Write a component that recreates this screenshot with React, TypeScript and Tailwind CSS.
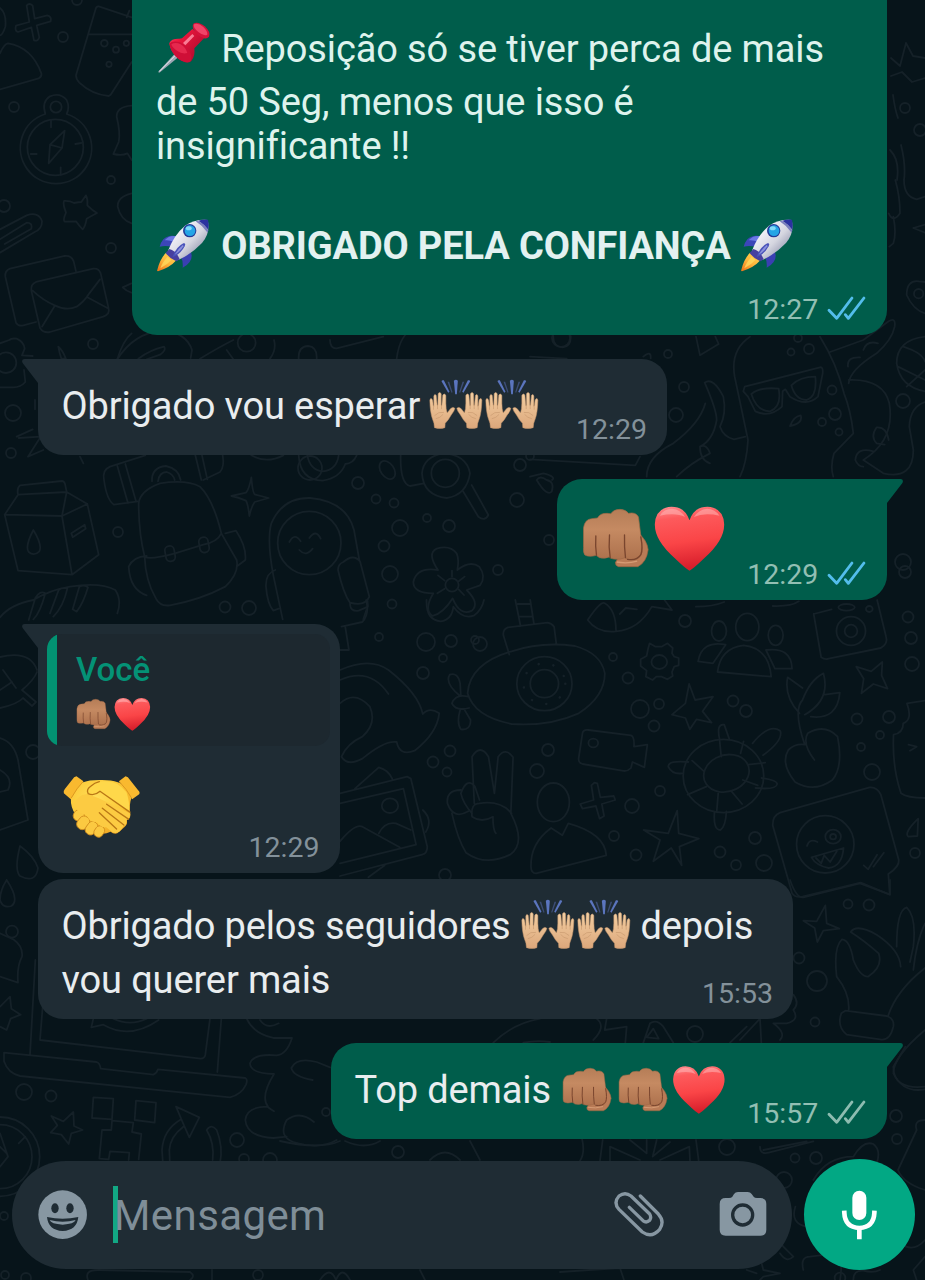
import React from "react";

type EmojiProps = { className?: string };

function Gradients() {
  return (
    <defs>
      <linearGradient id="heartFill" x1="0" y1="0" x2="0.15" y2="1">
        <stop offset="0" stopColor="#ff8f92" />
        <stop offset="0.22" stopColor="#fd5a5c" />
        <stop offset="0.6" stopColor="#fa4547" />
        <stop offset="1" stopColor="#d81f2c" />
      </linearGradient>
      <linearGradient id="fistFill" x1="0" y1="0" x2="0" y2="1">
        <stop offset="0" stopColor="#b57d57" />
        <stop offset="0.4" stopColor="#c58a62" />
        <stop offset="1" stopColor="#ad714d" />
      </linearGradient>
      <linearGradient id="handFill" x1="0" y1="0" x2="0" y2="1">
        <stop offset="0" stopColor="#f3cfa2" />
        <stop offset="1" stopColor="#dca77b" />
      </linearGradient>
      <radialGradient id="shakeFill" cx="0.4" cy="0.35" r="0.75">
        <stop offset="0" stopColor="#ffdf5a" />
        <stop offset="0.6" stopColor="#fcc937" />
        <stop offset="1" stopColor="#ea9c1e" />
      </radialGradient>
      <linearGradient id="rocketBody" x1="0" y1="0" x2="1" y2="1">
        <stop offset="0.25" stopColor="#f4f3fa" />
        <stop offset="0.55" stopColor="#d5d6e0" />
        <stop offset="0.85" stopColor="#8d90ab" />
      </linearGradient>
      <linearGradient id="rocketFlame" x1="0.8" y1="0.1" x2="0.2" y2="1">
        <stop offset="0" stopColor="#ffcf4d" />
        <stop offset="0.5" stopColor="#fdb53c" />
        <stop offset="1" stopColor="#ef7a1d" />
      </linearGradient>
      <linearGradient id="pinFill" x1="0" y1="0" x2="1" y2="0.8">
        <stop offset="0" stopColor="#ff4a68" />
        <stop offset="0.35" stopColor="#e8163c" />
        <stop offset="1" stopColor="#a8082c" />
      </linearGradient>
    </defs>
  );
}

function Pin({ className = "h-[54px] w-[54px]" }: EmojiProps) {
  return (
    <svg viewBox="78 60 162 162" className={`shrink-0 overflow-visible ${className}`}>
      <path d="M133 160 L143 170 L90 214 Q84 217 86 211 Z" fill="#9fa7b4" />
      <path d="M135 164 L88 211" stroke="#e8ebf2" strokeWidth="3" />
      <path d="M118 126 Q124 112 148 113 L156 112 L187 84 L222 112 L193 142 Q196 166 184 180 Q168 190 146 174 Q120 152 118 126Z" fill="url(#pinFill)" />
      <path d="M118 128 Q128 118 150 124 Q176 138 184 162 Q186 176 180 183 Q166 188 146 174 Q122 154 118 128Z" fill="#cf0f37" />
      <path d="M124 130 Q136 122 152 130 Q168 140 172 156 Q156 160 142 150 Q126 140 124 130Z" fill="#ee3559" opacity="0.7" />
      <path d="M190 68 Q204 60 224 76 Q243 93 237 107 Q226 120 204 102 Q182 82 190 68Z" fill="#d5123b" />
      <path d="M192 70 Q204 64 220 78 Q234 92 232 101 Q222 107 206 94 Q188 80 192 70Z" fill="#f04468" />
      <path d="M159 126 L187 99 L193 105 L166 133Z" fill="#ff8ea5" opacity="0.85" />
    </svg>
  );
}

function Rocket({ className = "h-[54px] w-[54px]" }: EmojiProps) {
  return (
    <svg viewBox="78 653 162 162" className={`shrink-0 overflow-visible ${className}`}>
      <path d="M146 710 Q118 700 100 717 Q92 727 89 739 Q108 734 129 741Z" fill="#3c46b8" />
      <path d="M140 708 Q118 704 104 720 Q116 718 132 724Z" fill="#6a78e4" />
      <path d="M181 748 Q190 772 179 785 Q170 797 158 802 Q160 784 152 768Z" fill="#3a3fb2" />
      <path d="M108 757 L139 780 Q120 802 84 813 Q80 813 82 808 Q90 776 108 757Z" fill="url(#rocketFlame)" />
      <path d="M113 769 Q96 787 91 804 Q112 793 124 779Z" fill="#ffd95e" opacity="0.8" />
      <path d="M114 751 Q132 704 165 676 Q196 656 233 659 Q242 698 216 728 Q184 762 143 780 Q126 772 114 751Z" fill="url(#rocketBody)" />
      <path d="M118 746 Q139 751 149 777 L139 783 Q118 774 107 758Z" fill="#4740a0" />
      <path d="M205 661 Q220 656 234 658 Q238 674 235 688 Q222 672 205 661Z" fill="#2b32a0" />
      <path d="M203 661 Q222 669 235 690 L233 697 Q218 676 197 663Z" fill="#7b80bd" />
      <circle cx="179" cy="691" r="20" fill="#233c98" />
      <circle cx="180" cy="691" r="16" fill="#25a5e6" />
      <ellipse cx="176" cy="684" rx="9" ry="6" fill="#83dcfa" />
      <path d="M160 729 Q137 741 128 770 Q151 763 164 738 Q168 726 160 729Z" fill="#4952b9" />
      <path d="M159 733 Q143 746 134 763 Q151 754 160 738Z" fill="#8b91dd" />
    </svg>
  );
}

function Hands() {
  const hand =
    "M107 263 Q107 250 101 237 Q94 219 93 181 Q94 174 98 176 Q102 177 103 196 L105 199 L105 168 Q107 160 112 166 L115 196 L117 196 L118 161 Q122 154 127 161 L127 196 L129 197 L132 165 Q136 158 141 166 L141 190 Q141 208 145 219 L155 206 Q163 199 168 205 Q167 213 157 225 Q149 240 139 250 L138 263 Q124 268 107 263Z";
  return (
    <svg viewBox="87.5 114 167 162" className="h-[54px] w-[55.7px] shrink-0 overflow-visible">
      <g fill="url(#handFill)" stroke="#c8976c" strokeWidth="1.6" strokeLinejoin="round">
        <path d={hand} />
        <path d={hand} transform="translate(342 0) scale(-1 1)" />
      </g>
      <g fill="none" stroke="#c99a70" strokeWidth="2" strokeLinecap="round">
        <path d="M108 226 Q119 214 134 217 M112 236 Q124 234 132 224 M104 198V208 M116 196V206 M128 197V206" />
        <path d="M234 226 Q223 214 208 217 M230 236 Q218 234 210 224 M238 198V208 M226 196V206 M214 197V206" />
      </g>
      <g fill="#5b75be">
        <path d="M165 122 Q171 116 177 122 L174 163 H169Z" />
        <path d="M128 124 Q129 119 135 121 L152 155 L148 158Z" />
        <path d="M214 124 Q213 119 207 121 L190 155 L194 158Z" />
      </g>
      <g fill="#3d4d76">
        <path d="M146 125 L151 125 L161 157 L158 158Z" />
        <path d="M196 125 L191 125 L181 157 L184 158Z" />
      </g>
    </svg>
  );
}

function Fist({ className = "h-[54px] w-[55.7px]" }: EmojiProps) {
  return (
    <svg viewBox="116.5 124 225 218" className={`shrink-0 overflow-visible ${className}`}>
      <path d="M296 218 Q324 242 327 270 Q322 308 296 321 L238 321 Q228 319 229 308 L240 290Z" fill="#b97b56" stroke="#9c6240" strokeWidth="2" />
      <path d="M133 204 Q137 179 157 177 L175 175 Q183 160 204 161 L215 162 Q224 149 243 149 Q260 150 268 161 Q290 156 298 172 L304 220 Q310 254 308 279 Q302 300 284 301 Q265 302 258 294 Q244 301 224 298 Q214 297 210 292 Q198 298 181 294 L171 287 Q150 293 137 286 Q132 281 133 263Z" fill="url(#fistFill)" stroke="#9f6846" strokeWidth="2" />
      <g fill="none" stroke="#79452e" strokeWidth="4" strokeLinecap="round">
        <path d="M170 229 Q168 258 172 287" />
        <path d="M211 226 Q208 262 213 294" />
        <path d="M256 226 Q255 264 259 294" />
        <path d="M305 232 Q312 268 305 285 Q293 304 265 299" />
      </g>
      <path d="M233 307 Q266 313 294 304" fill="none" stroke="#d59b74" strokeWidth="4" />
    </svg>
  );
}

function Heart({ className = "h-[54px] w-[55.7px]" }: EmojiProps) {
  return (
    <svg viewBox="338.5 122 225 218" className={`shrink-0 overflow-visible ${className}`}>
      <path d="M451 331 Q440 326 407 294 Q346 240 347 192 Q349 142 397 139 Q437 139 451 180 Q465 139 505 139 Q553 142 555 192 Q556 240 495 294 Q462 326 451 331Z" fill="url(#heartFill)" />
      <path d="M362 166 Q374 145 399 145 Q424 147 438 170 Q410 156 362 166Z M464 170 Q479 147 504 145 Q528 146 541 166 Q494 156 464 170Z" fill="#ffb6b6" opacity="0.55" />
    </svg>
  );
}

function Handshake() {
  return (
    <svg viewBox="188 492 237 196" className="h-[65px] w-[79px] shrink-0 overflow-visible">
      <path d="M218 540 Q238 510 300 510 Q363 508 386 536 L398 561 Q388 584 394 615 Q392 630 383 630 Q386 644 376 652 Q366 661 354 671 Q343 674 334 666 Q313 676 300 670 Q240 636 222 604 Q210 580 216 556Z" fill="url(#shakeFill)" />
      <g fill="#fbc941" stroke="#cf8a1c" strokeWidth="2.5">
        <rect x="222" y="600" width="32" height="34" rx="15" transform="rotate(30 238 617)" />
        <rect x="235" y="618" width="33" height="42" rx="15" transform="rotate(38 251 639)" />
        <rect x="261" y="634" width="31" height="42" rx="14" transform="rotate(36 276 655)" />
        <rect x="286" y="648" width="28" height="35" rx="13" transform="rotate(34 300 665)" />
      </g>
      <path d="M222 588 Q230 555 264 552 L300 566 L392 610 Q394 628 382 630 Q384 647 372 651 Q358 677 338 667 L320 652 Q306 656 293 636 Q270 640 262 616 Q240 612 235 603Z" fill="#fccb42" />
      <path d="M231 499 L252 514 Q234 535 214 568 L193 550 Q190 544 196 537 L224 502Z M379 499 L359 514 Q382 538 399 568 L420 553 Q424 548 417 541 L386 502Z" fill="#f9b92f" />
      <path d="M250 516 Q233 533 215 565 M361 516 Q382 537 397 564" stroke="#dc9820" strokeWidth="3" fill="none" />
      <path d="M266 550 Q260 539 274 529 Q292 514 318 514 Q353 511 382 547 Q392 578 390 604 L325 558 Q314 552 301 544 Q283 560 266 550Z" fill="#ffd84a" />
      <path d="M266 550 Q260 539 274 529 Q286 518 300 515 M266 551 Q284 560 302 544 L392 607 M322 583 L388 628 M309 595 L374 646 M300 609 L352 658" fill="none" stroke="#b97716" strokeWidth="4" strokeLinecap="round" />
    </svg>
  );
}

function Ticks({ className }: { className: string }) {
  return (
    <svg viewBox="890 342 124 84" className={`ml-[8px] h-[28px] w-[41.3px] shrink-0 -translate-y-[2px] ${className}`} fill="none" stroke="currentColor" strokeWidth="8.5" strokeLinecap="round" strokeLinejoin="round">
      <path d="M899 391 L922 415 L968 354" />
      <path d="M948 404 L957 415 L1004 354" />
    </svg>
  );
}

function Tail({ side, className }: { side: "left" | "right"; className: string }) {
  return (
    <svg viewBox="0 0 17 26" className={`absolute top-0 h-[26px] w-[17px] ${side === "left" ? "-left-4" : "-right-4"} ${className}`}>
      {side === "left" ? (
        <path fill="currentColor" d="M17 0H2.5Q-1 0 .6 4L16 24 L17 26Z" />
      ) : (
        <path fill="currentColor" d="M0 0H14.5Q18 0 16.4 4L1 24 L0 26Z" />
      )}
    </svg>
  );
}

function Time({ value, out, ticks }: { value: string; out?: boolean; ticks?: "read" | "sent" }) {
  return (
    <div className={`ml-auto flex h-[34px] shrink-0 items-center self-end whitespace-nowrap text-[28.5px] leading-[34px] ${out ? "text-[#92bfb3]" : "text-[#83919a]"}`}>
      <span>{value}</span>
      {ticks === "read" && <Ticks className="text-[#53bdeb]" />}
      {ticks === "sent" && <Ticks className="text-[#8dbcb0]" />}
    </div>
  );
}

const dots: [number, number, number][] = [
  [63, 37, 5], [77, 0, 5], [14, 107, 5], [111, 180, 4], [111, 248, 5], [4, 206, 6], [93, 344, 5], [13, 413, 8], [11, 453, 5],
  [118, 532, 5], [225, 607, 5.5], [249, 608, 7], [358, 483, 6], [376, 499, 4.5], [394, 503, 4.5], [400, 528, 8], [427, 518, 4], [449, 526, 6],
  [384, 546, 5.5], [390, 574, 8], [392, 604, 4.5], [683, 547, 5], [676, 574, 7], [684, 387, 5], [676, 415, 7], [668, 354, 4], [561, 338, 9],
  [809, 349, 5], [791, 352, 3.5], [798, 338, 4], [832, 390, 4.5], [835, 414, 6], [822, 422, 4], [839, 432, 3.5], [903, 562, 8], [905, 572, 6],
  [903, 401, 7], [379, 637, 4], [426, 642, 9], [451, 641, 6], [480, 644, 7], [443, 658, 4], [423, 673, 6], [613, 657, 4], [628, 678, 5.5],
  [640, 709, 9], [659, 704, 5], [654, 726, 5.5], [733, 701, 5.5], [746, 711, 6], [685, 621, 6], [857, 719, 5.5], [889, 717, 6], [880, 735, 4],
  [861, 747, 4], [872, 772, 8], [908, 617, 5.5], [911, 638, 6], [912, 664, 7], [450, 751, 5.5], [433, 762, 5.5], [447, 772, 4.5], [548, 750, 6],
  [537, 771, 7], [632, 806, 7], [660, 791, 5], [614, 836, 5], [636, 855, 5.5], [720, 852, 5.5], [736, 865, 5], [764, 863, 8], [755, 838, 6],
  [915, 853, 5], [445, 875, 6], [848, 904, 4.5], [869, 905, 5.5], [799, 958, 5.5], [817, 981, 10], [815, 1022, 4.5], [695, 1034, 8],
  [24, 1092, 8], [51, 1096, 5.5], [237, 1140, 7], [244, 1159, 5], [270, 1160, 7], [326, 1112, 4], [896, 1116, 6], [897, 1139, 5],
  [727, 1147, 8], [795, 1158, 4.5], [816, 1158, 6], [784, 1180, 8], [398, 1152, 6], [4, 1216, 4], [5, 1275, 4], [26, 1278, 5], [258, 1275, 5],
  [520, 465, 6], [498, 570, 5], [517, 500, 7], [530, 456, 4], [549, 540, 5], [545, 430, 6], [475, 640, 4], [905, 108, 5], [920, 130, 6], [33, 752, 7], [310, 468, 12],
];

function Wallpaper() {
  return (
    <svg viewBox="0 0 925 1280" className="pointer-events-none absolute inset-0 h-[1280px] w-[925px] [&_circle]:[vector-effect:non-scaling-stroke] [&_ellipse]:[vector-effect:non-scaling-stroke] [&_path]:[vector-effect:non-scaling-stroke] [&_rect]:[vector-effect:non-scaling-stroke]" fill="none" stroke="#152128" strokeWidth="1.8" strokeLinejoin="round" strokeLinecap="round">
      <Gradients />
      {dots.map(([x, y, r], i) => (
        <circle key={i} cx={x} cy={y} r={r} />
      ))}

      {/* plus, drink, compass, star, clip, envelopes */}
      <g transform="scale(.33333)">
        <path d="M80 17Q88 7 98 17L104 56L142 46Q156 50 152 64L110 76L118 112Q114 125 102 121L94 82L54 96Q43 92 48 77L88 66Z" />
        <path d="M0 24Q20 40 16 80Q8 104 0 106M0 160Q12 132 24 130Q96 142 124 220Q126 230 116 235L0 268" />
        <path d="M395 52L296 19Q288 18 286 30L228 226Q228 238 238 248Q276 284 326 288L332 284L395 186M267 103H395M380 52L388 32" />
        <circle cx="313" cy="130" r="10" /><circle cx="348" cy="149" r="9" /><circle cx="379" cy="130" r="8" /><circle cx="327" cy="193" r="8" />
        <path d="M136 342Q124 306 150 289Q180 276 200 300Q210 322 200 342A107 107 0 1 1 136 342Z" />
        <circle cx="166" cy="442" r="84" /><circle cx="168" cy="321" r="17" />
        <path d="M194 392L150 434L146 490L186 444Z M150 434L186 444 M153 360V382M182 502V524M92 462L110 462M226 432L244 429" />
        <path d="M395 317Q350 320 350 350Q362 398 356 426L340 462Q366 468 382 460L395 480M395 580Q352 590 353 620Q362 660 395 670" />
        <path d="M244 606L258 586Q264 598 262 616Q278 632 291 639Q274 648 260 656Q256 680 248 688Q236 676 228 664L194 665Q188 660 198 638Q188 612 192 603Q210 602 222 609Q236 606 244 606Z" />
        <path d="M0 688L80 646Q116 634 126 664Q126 688 104 696L0 758M0 718L80 668Q98 668 94 686L14 732" />
        <path d="M228 814L221 784Q214 766 194 768L30 806Q14 812 16 830L48 968Q56 980 70 976L108 966" />
        <path d="M108 846L280 806Q296 804 302 820L326 926Q330 942 310 950L150 996Q130 1000 120 984L94 872Q92 852 108 846ZM98 872Q130 902 164 916Q200 934 230 920Q252 906 268 880L300 838M164 918L126 980M262 892L322 924" />
        <path d="M394 850L368 862Q380 874 394 878M175 1040Q178 1060 184 1075L198 1077Q188 1050 175 1040ZM352 1077Q370 1020 395 1000" />
        <circle cx="18" cy="1088" r="31" />
        <path d="M0 1030L28 1020Q34 1014 50 1016Q72 1026 74 1046L66 1066L98 1068M72 1110L76 1146Q62 1162 40 1162L0 1162" />
      </g>

      {/* milk carton, backpack, camera, sparkle, astronaut, flower */}
      <g transform="translate(0 340) scale(.33333)">
        <path d="M60 436L186 423Q194 424 196 436L200 456L54 464Q50 444 60 436ZM54 464L14 524L186 528L200 456L262 492L296 644L216 704L54 692L14 524M186 528L216 704M186 528L262 492M100 570Q74 620 86 636Q102 650 118 634Q128 616 100 570ZM214 580L254 554L257 566L218 592Z" />
        <path d="M0 832Q30 794 100 780Q150 750 210 740Q300 725 346 750Q366 780 352 820M86 840L106 774Q120 750 136 760Q120 820 100 838M150 820L176 750Q190 740 202 746Q190 800 160 830M218 808L238 740Q254 732 264 742Q250 790 230 815Z" />
        <path d="M436 346L330 380Q306 390 312 420Q320 480 342 494L414 484M352 378L384 490M376 372L408 484M456 424Q454 382 498 378Q536 386 542 420M474 424Q478 396 500 396Q520 402 524 420M586 346L604 420M606 346L622 418M668 346Q674 380 660 396L610 420" />
        <path d="M416 490Q420 452 480 430Q560 418 600 440Q640 480 664 580Q652 606 610 614L525 640Q450 660 434 650Q416 580 416 490ZM434 650Q436 720 468 776Q480 800 510 796Q600 780 676 740Q718 700 710 660L664 580M440 648Q400 650 386 680Q390 750 440 766M676 580L708 572Q740 620 736 660L712 678" />
        <rect x="496" y="618" width="28" height="46" rx="13" transform="rotate(-10 510 640)" /><rect x="598" y="592" width="28" height="46" rx="13" transform="rotate(-10 610 615)" />
        <path d="M754 412Q758 462 766 464L806 474L764 486Q754 500 748 528Q744 492 738 482Q714 472 694 468L738 458Q748 446 754 412Z" />
        <path d="M820 706Q800 600 814 550Q848 472 930 474Q1040 484 1062 570L1078 660M820 706L848 838M826 690Q796 700 798 740Q802 792 820 812L836 806M1030 666Q1060 640 1080 664L1108 770Q1096 800 1050 788Q1030 760 1014 690Q1014 672 1030 666ZM1050 790Q1050 816 1076 812L1104 800L1102 778M1090 838L1100 808" />
        <circle cx="928" cy="609" r="95" /><path d="M868 606Q884 576 902 604M928 594Q948 566 962 596M898 630Q918 652 938 626" />
        <path d="M896 346Q900 420 968 422Q1020 414 1036 372Q1060 370 1070 346M922 346Q930 390 968 394Q1010 390 1016 346M754 346Q800 372 850 346" />
        <ellipse cx="1162" cy="390" rx="20" ry="30" transform="rotate(-35 1162 390)" />
        <path d="M1202 346Q1200 430 1230 438L1272 430M1340 474Q1270 466 1266 400Q1270 350 1330 340Q1400 344 1410 400Q1400 465 1340 474ZM1390 455L1435 530Q1455 545 1465 525L1415 435" /><circle cx="1336" cy="400" r="42" />
        <path d="M1314 690Q1280 640 1310 626Q1350 614 1370 640Q1378 660 1372 690Q1410 660 1438 680Q1460 710 1440 736L1400 750Q1440 790 1416 812Q1380 830 1358 775Q1330 820 1298 828Q1270 810 1300 760Q1240 760 1240 726Q1250 680 1314 690Z" /><circle cx="1356" cy="735" r="20" /><path d="M1356 710V692M1334 722L1314 706M1334 746L1312 760M1376 724L1394 710M1376 748L1392 765" />
        <path d="M352 58Q400-20 490-30Q560-20 576 30L572 54M415 56Q450 30 492 20Q500 30 480 44L440 58M600 56Q660 20 700 0M700 58L680 30M822 0Q830 30 810 56M990 0Q990 26 1010 25L1150-10M1190 56Q1200-20 1240-30" />
        <circle cx="740" cy="8" r="27" /><path d="M896 56Q894 20 924 18Q952 20 950 56M105 180V208M50 290L98 268M84 350L130 330M84 350L122 290L56 294M240 350L250 370" />
        <path d="M1610 420Q1640 470 1655 455Q1665 425 1640 420Q1620 405 1610 420Z" />
      </g>

      {/* glasses character, octopus arms, ball */}
      <g transform="translate(530 180) scale(.33333)">
        <path d="M70 468Q68 500 98 502Q124 500 122 468M498 470L510 526L566 492L556 470M340 530Q364 510 362 535M660 470Q600 510 614 590L654 780Q650 850 630 890M870 470Q920 550 942 640Q962 690 970 760L912 820Q900 860 910 890M900 516L1000 480L1076 424Q1098 410 1094 440Q1086 480 1040 520Q960 570 956 610M956 600Q1060 596 1078 670Q1096 780 1000 840L1060 880Q1150 900 1150 810L1138 740Q1140 680 1185 666" />
        <path d="M644 620L870 562Q880 560 878 580L864 650Q830 682 780 650L766 628L758 634L756 680Q720 714 676 694L654 650L640 634Z" />
        <path d="M664 642Q690 620 746 626Q756 680 720 694Q680 694 664 642ZM784 616Q810 590 856 590Q862 650 830 660Q796 660 784 616ZM780 738Q790 710 812 706Q820 730 780 738Z" />
        <path d="M524 608Q550 590 580 650Q590 700 570 740Q580 770 612 778L646 770M524 608Q560 690 560 720Q550 780 510 800Q510 840 540 850M350 890Q350 830 430 790Q510 730 526 670M440 890Q480 850 540 820Q530 790 510 800" />
        <path d="M1185 470Q1100 480 1100 550Q1110 620 1185 634M1120 500Q1180 520 1185 545M1104 560L1185 600M1130 620L1185 570M1040 742Q1070 740 1076 780M1040 742Q1020 770 1040 790L1064 794M1030 814Q980 800 976 840Q984 860 1000 860M1000 510Q1010 480 1044 490M954 560Q950 530 990 532" />
        <path d="M1166 304Q1130 300 1130 345Q1150 390 1185 400M1185 306L1166 304" /><circle cx="1166" cy="341" r="14" />
        <path d="M1096 0Q1110 50 1110 100Q1090 130 1076 100M1122 0Q1122 50 1160 58L1185 50M1150 144L1185 158M1150 144L1185 134M1090 110Q1100 160 1090 190L1078 200" />
        <path d="M0 838L316 856L330 830M0 530L110 536M0 890L40 880Q80 890 66 900" />
      </g>
      <path d="M906 43L900 66L891 58M906 43L913 56L925 58M891 76L902 72L912 82L925 78M893 95Q895 110 898 118M890 150Q900 160 897 180M901 145Q906 165 904 180" />

      {/* submarine, video camera, turtle, plant, people, sticker */}
      <g transform="translate(340 600) scale(.373 .33333)">
        <path d="M342 280Q348 190 460 154Q540 124 630 138Q700 160 710 220Q710 290 640 340Q560 380 460 372Q360 350 342 280ZM454 164L438 106Q436 88 450 82L556 68Q568 70 574 80L580 132M470 0L484 78M510 0L520 72M476 12H510M480 50H514M344 290Q310 280 300 310Q310 334 346 324M322 288Q280 250 294 224Q316 216 322 250L324 288M322 330Q312 370 324 388Q350 392 350 360L332 326" />
        <ellipse cx="548" cy="251" rx="74" ry="81" /><ellipse cx="548" cy="251" rx="38" ry="42" /><ellipse cx="548" cy="251" rx="56" ry="61" strokeDasharray=".1 15" strokeWidth="2.5" />
        <path d="M650 400Q652 388 666 390L780 406Q790 410 788 440L824 434L816 502L784 486L780 504Q770 516 756 512L650 492Q638 488 640 474Z" /><circle cx="679" cy="429" r="13" />
        <path d="M826 146L830 130L846 140H862L878 130L892 144L890 160L896 170L908 174V196L896 200L890 216L892 228L878 238L862 230L848 230L838 240L820 230L822 212L806 198L806 178L822 168Z" /><circle cx="856" cy="186" r="21" />
        <path d="M936 252L952 300L1000 290L972 334L996 368L956 358L938 388L926 354L890 344L926 310ZM904 632L908 700L962 716L910 740L916 796L888 744L840 784L858 720L814 690L880 700Z" />
        <path d="M682 548L690 550L698 592L734 588L738 600L702 612L708 648L696 656L686 618L650 626L644 612L680 600L674 556Z" />
        <ellipse cx="1092" cy="81" rx="31" ry="41" /><ellipse cx="1016" cy="93" rx="20" ry="30" /><ellipse cx="1168" cy="106" rx="20" ry="30" /><path d="M1012 216Q1020 144 1082 136Q1150 144 1156 230ZM1034 134Q970 120 960 184L1000 190ZM1142 150Q1210 140 1212 206L1166 206Z" />
        <path d="M360 610L354 470Q376 430 398 470L414 580L424 470Q444 440 464 472L458 640Q500 730 456 764Q390 800 338 758Q316 720 300 640M374 610Q350 610 354 650Q380 670 410 650Q410 690 418 700M354 640Q330 610 324 580Q340 530 362 560L374 600M324 570Q284 570 288 610Q304 660 344 634M374 610Q430 600 460 640" />
        <ellipse cx="572" cy="607" rx="43" ry="58" /><path d="M566 684L596 706L612 670Q710 700 714 766L526 820Q512 820 512 800Q510 730 566 684Z" />
        <ellipse cx="1028" cy="528" rx="108" ry="110" /><ellipse cx="1036" cy="520" rx="63" ry="54" transform="rotate(-30 1036 520)" />
        <path d="M1018 420Q1008 370 1030 374L1044 418M1106 430Q1150 370 1180 392Q1190 420 1134 466M934 486Q880 480 880 500Q890 524 918 520M1130 534Q1172 540 1172 552Q1170 570 1114 564M1004 636Q1000 690 1020 690Q1034 680 1036 634M1018 424L1022 470M1082 424L1074 460M1140 488L1094 494M1080 540L1120 556M1048 572L1078 612M1014 580L1010 634M982 560L932 584M976 514L944 482" />
        <path d="M1246 434Q1214 330 1240 300Q1260 240 1296 220Q1316 300 1246 344M1232 340Q1190 290 1200 232L1240 264M1300 284L1340 278Q1334 360 1262 350M1272 480Q1238 430 1254 400Q1300 370 1334 410Q1350 500 1320 540Q1270 580 1220 546Q1180 490 1202 450Q1220 430 1246 434" />
        <path d="M1454 186L1452 226L1468 266L1430 252L1398 280L1404 236L1384 200L1424 214Z" />
        <path d="M1270 42L1318 28M1270 42L1290 172Q1300 180 1310 176L1450 144Q1470 130 1464 110L1440 0" /><ellipse cx="1370" cy="93" rx="39" ry="43" /><ellipse cx="1370" cy="93" rx="17" ry="19" /><ellipse cx="1358" cy="22" rx="22" ry="10" /><circle cx="1419" cy="27" r="9" />
        <path d="M1180 638L1420 562Q1440 560 1450 584L1498 780Q1500 800 1470 822L1474 884L1396 848L1240 890Q1220 894 1212 880L1160 676Q1160 646 1180 638Z" />
        <ellipse cx="1301" cy="733" rx="77" ry="86" /><circle cx="1322" cy="710" r="21" /><circle cx="1322" cy="710" r="8" /><path d="M1252 738Q1258 714 1280 726M1264 772L1350 744Q1346 800 1310 804Q1276 796 1264 772ZM1276 774L1290 790L1298 766L1314 786L1332 754M1404 796L1416 808L1440 764M1430 800L1458 758" />
        <path d="M664 60Q700 0 710 10Q740 30 740 94Q690 100 664 60ZM740 94Q800 90 836 20L890 30L870 0M750 42L766 24L796 28M0 210Q80 170 130 210Q210 280 222 342Q240 320 266 340Q260 400 200 452Q160 470 152 426Q120 420 60 476Q20 500 4 470Q20 430 60 410Q100 370 80 320Q40 270 0 310M0 240Q80 200 130 282" />
        <path d="M0 580L180 530L190 536L234 740Q234 760 220 764L0 828M0 610L170 566L204 734L0 790M0 724Q40 670 60 680L160 742M104 700Q120 664 150 670L190 690M40 566L104 502Q130 510 140 536M222 630Q250 660 230 696M76 832L120 796" /><circle cx="134" cy="617" r="22" />
        <path d="M1568 302L1520 310Q1536 360 1510 370Q1510 400 1484 404Q1480 500 1504 580Q1520 594 1568 594M1524 434L1546 440L1528 452M1550 656Q1510 700 1524 710L1548 708ZM4 80L60 66Q80 40 70 0M232 0Q230 60 270 64Q300 60 304 20Q330 60 360 46Q380 30 386 0M14 80L24 150H0M954 20Q1000 20 1030 6M1160 18Q1210 20 1230 4" />
      </g>

      {/* left edge leaves and drops */}
      <path d="M0 657Q30 650 37 670M0 708Q18 704 23 698L32 706L36 702L22 690Q34 680 37 672M3 670L16 688M0 690L12 682M0 738Q14 742 18 760L28 820L0 830M0 770Q14 778 8 790L0 792M20 846Q14 870 20 876Q36 884 38 868Q34 856 20 846Z" />

      {/* laptop, dancing pixels, refresh, steam */}
      <g transform="translate(0 880) scale(.33333)">
        <path d="M20 0Q0 30 0 60Q8 86 34 78Q60 60 20 0M0 160Q20 170 40 178Q70 200 66 230Q50 260 54 308L0 290" /><circle cx="36" cy="155" r="18" />
        <path d="M0 380L30 350L34 386L62 404L32 416L20 450L0 440M106 240L90 524M128 380L120 480L602 536Q614 536 616 524L630 416M664 416L652 576M12 518L290 546Q300 550 302 566L460 584Q470 580 474 568L736 594Q744 598 738 614Q724 644 690 652L60 588Q24 580 12 544Z" />
        <path d="M280 416L274 442L310 434Q390 480 476 420M340 416Q390 440 440 416M740 416Q760 460 820 474L876 474Q860 524 830 526Q760 520 750 550Q750 580 822 582Q780 650 804 680Q740 680 736 720Q740 770 820 774L860 770M938 600Q880 590 874 564Q890 530 950 546L990 562M822 694Q800 680 804 680M942 726Q900 690 860 720Q834 770 880 786Q960 810 1010 780M780 420Q800 450 836 430" />
        <path d="M280 652L340 656L336 718L276 714ZM408 662L468 668L464 728L404 720ZM336 722L400 728L396 756L424 762L416 838M336 722L334 750L306 750L298 836L326 838L330 814L388 818L386 840" />
        <path d="M190 724L220 696L222 738L248 750L214 760L206 792L184 764L152 758L172 736L154 708ZM540 720Q490 750 486 810L490 870M550 740Q510 770 508 810L510 860M528 680L598 712L568 772L552 736ZM620 750Q634 730 650 750Q670 800 660 850M620 750Q644 790 638 840" />
        <circle cx="0" cy="830" r="96" /><circle cx="0" cy="830" r="119" /><path d="M0 760L24 830L0 860M56 790L76 770M0 800L20 820" />
      </g>

      {/* hand, flowers and lower right doodles */}
      <g transform="translate(480 880) scale(.33333)">
        <path d="M930 0Q950 56 970 52L1140 10L1230 44V0M1036 76L1040 130L1078 146L1030 152L1012 186L1004 144L970 122L1010 124Z" />
        <path d="M1106 390Q1110 340 1070 290Q1060 200 1086 178Q1110 180 1120 240Q1140 290 1164 290Q1210 260 1196 220Q1150 180 1112 156Q1130 130 1190 164Q1260 210 1262 260M1250 200Q1250 90 1280 82Q1310 110 1300 200L1290 246M1300 270Q1310 180 1335 130M1335 264Q1250 330 1224 408M1096 392L1220 408Q1244 416 1240 440Q1230 484 1200 478L1100 464Q1070 440 1084 400ZM1335 450Q1240 530 1240 580Q1270 640 1335 628" />
        <path d="M940 344Q960 370 940 390Q960 420 920 430L880 430Q920 460 900 480M840 416L780 480M840 416L844 488M340 480Q380 440 350 416M380 416L374 450L440 440L436 488M490 488L510 430Q530 416 550 440L580 488M500 472L520 446L536 476ZM40 488Q100 430 180 416M130 488Q170 480 210 486M750 488L800 440" />
      </g>
      <g transform="translate(560 1040) scale(.33333)">
        <path d="M66 296Q76 340 60 362M128 300L120 362M150 362V320L240 360M210 300L260 340V300M290 300L278 350L330 306M300 360L388 320L390 362M408 300L416 362M610 330L740 304M600 320Q600 344 626 338L760 304M760 420Q800 350 880 350Q910 300 940 312Q964 330 950 370M1095 140Q1000 150 1000 80L1036 20M1095 240Q1060 240 1070 270L1014 390Q1030 430 1095 450M706 500Q690 550 740 560M650 600L700 650Q680 670 660 640M730 690Q720 650 750 650L830 640Q850 660 840 720M600 650L610 690L660 700L610 710L600 720M560 690L590 700M1020 610Q1060 640 1095 600M880 720Q880 690 910 692Q940 700 960 690M1095 650L1060 690L1070 720" /><circle cx="840" cy="714" r="16" />
      </g>
      <path d="M88 1280Q84 1270 98 1270L190 1272Q196 1276 190 1280M212 1280V1270M320 1280Q330 1265 336 1280Q342 1265 350 1280M420 1270L425 1280M560 1272L620 1268L624 1280M280 1141Q320 1150 340 1141M345 1141Q365 1150 380 1141M470 1141L480 1160M430 1160Q445 1145 460 1160" />
    </svg>
  );
}

const textLine = "flex items-start whitespace-pre";

export default function App() {
  return (
    <main className="relative flex h-[1280px] w-[925px] flex-col overflow-hidden bg-[#07141a] font-['Roboto','Noto_Sans',sans-serif]">
      <Wallpaper />

      <section className="relative flex h-[1139px] flex-col px-[38px] text-[38px] text-[#e9edef]">
        <div className="flex h-[334.5px] w-[755px] flex-col self-end rounded-b-[25px] bg-[#005d4b] pb-[8px] pl-[24px] pr-[19.5px] pt-[21px] text-[#def3ed]">
          <div className={`${textLine} h-[54px] leading-[56px] tracking-[-0.13px]`}>
            <Pin />
            <span className="ml-[2px]"> Reposição só se tiver perca de mais</span>
          </div>
          <div className={`${textLine} h-[49.4px] leading-[55px] tracking-[-0.13px]`}>de 50 Seg, menos que isso é</div>
          <div className={`${textLine} h-[45px] leading-[45px] tracking-[-0.13px]`}>insignificante !!</div>
          <div className={`${textLine} mt-[48.6px] h-[54px] font-bold leading-[56px] tracking-[-0.13px] text-[#e3f1f0]`}>
            <Rocket />
            <span className="ml-[2px]"> OBRIGADO PELA CONFIANÇA </span>
            <Rocket />
          </div>
          <div className="mt-auto flex">
            <Time value="12:27" out ticks="read" />
          </div>
        </div>

        <div className="relative mt-[24.5px] flex h-[96px] w-[629px] rounded-[25px] rounded-tl-none bg-[#1f2c34] pb-[8px] pl-[23.5px] pr-[20px] pt-[19px]">
          <Tail side="left" className="text-[#1f2c34]" />
          <div className={`${textLine} h-[54px] leading-[56px] tracking-[-0.13px]`}>
            <span className="-mr-px">Obrigado vou esperar </span>
            <Hands />
            <Hands />
          </div>
          <Time value="12:29" />
        </div>

        <div className="relative mt-[24px] flex h-[121px] w-[330.5px] self-end rounded-[25px] rounded-tr-none bg-[#005d4b] pb-[8px] pl-[21px] pr-[19.5px] pt-[22px]">
          <Tail side="right" className="text-[#005d4b]" />
          <div className="flex h-[73px]">
            <Fist className="h-[72.7px] w-[75px]" />
            <Heart className="-ml-px h-[72.7px] w-[75px]" />
          </div>
          <Time value="12:29" out ticks="read" />
        </div>

        <div className="relative mt-[24px] flex h-[249px] w-[301.5px] flex-col rounded-[25px] rounded-tl-none bg-[#1f2c34] pb-[8px] pr-[20px] pt-[9.5px]">
          <Tail side="left" className="text-[#1f2c34]" />
          <div className="ml-[9px] flex h-[112px] w-[283px] shrink-0 overflow-hidden rounded-[15px] bg-[#1d282f]">
            <div className="w-[10px] shrink-0 bg-[#029272]" />
            <div className="flex flex-col pl-[19px] pt-[16px]">
              <div className="h-[40px] text-[33px] font-medium leading-[40px] text-[#049276]">Você</div>
              <div className="-ml-[2px] mt-[5px] flex">
                <Fist className="h-[37.3px] w-[38.7px]" />
                <Heart className="h-[37.3px] w-[38.7px]" />
              </div>
            </div>
          </div>
          <div className="flex flex-1 pl-[24px] pt-[28px]">
            <Handshake />
            <Time value="12:29" />
          </div>
        </div>

        <div className="mt-[6px] flex h-[140px] w-[755px] rounded-[25px] bg-[#1f2c34] pb-[8px] pl-[23.5px] pr-[20px] pt-[19px]">
          <div className="w-[640px] shrink-0">
            <div className={`${textLine} h-[54px] leading-[56px] tracking-[-0.13px]`}>
              <span>Obrigado pelos seguidores </span>
              <Hands />
              <Hands />
              <span> depois</span>
            </div>
            <div className={`${textLine} h-[54px] leading-[56px] tracking-[-0.13px]`}>vou querer mais</div>
          </div>
          <div className="-ml-4 flex flex-1">
            <Time value="15:53" />
          </div>
        </div>

        <div className="relative mt-[24px] flex h-[96px] w-[556.5px] self-end rounded-[25px] rounded-tr-none bg-[#005d4b] pb-[8px] pl-[24px] pr-[19.5px] pt-[19px]">
          <Tail side="right" className="text-[#005d4b]" />
          <div className={`${textLine} h-[54px] leading-[56px] tracking-[-0.13px]`}>
            <span className="-mr-px">Top demais </span>
            <Fist />
            <Fist />
            <Heart />
          </div>
          <Time value="15:57" out ticks="sent" />
        </div>
      </section>

      <footer className="relative mt-[20px] flex h-[111px] items-center pl-[12px] pr-[10px]">
        <div className="flex h-[108px] w-[780px] items-center rounded-full bg-[#1f2c34]">
          <svg viewBox="112 151 148 148" className="ml-[25.5px] h-[49.3px] w-[49.3px] shrink-0">
            <circle cx="186" cy="225" r="73" fill="#8797a2" />
            <ellipse cx="163" cy="206" rx="11" ry="15" fill="#1f2c34" />
            <ellipse cx="208" cy="206" rx="11" ry="15" fill="#1f2c34" />
            <path d="M139 232Q186 242 233 232Q229 272 186 274Q143 272 139 232Z" fill="#1f2c34" />
            <path d="M147 241Q186 251 225 241Q221 253 186 255Q151 253 147 241Z" fill="#8797a2" />
          </svg>
          <div className="ml-[26px] h-[57.5px] w-[5px] shrink-0 bg-[#12a884]" />
          <span className="-ml-[4px] mt-[2px] text-[42px] leading-[54px] tracking-[0.4px] text-[#7f8e98]">Mensagem</span>
          <svg viewBox="160 452 158 146" className="ml-auto h-[48.7px] w-[52.7px] shrink-0" fill="none" stroke="#8797a2" strokeWidth="10" strokeLinecap="round" strokeLinejoin="round">
            <path d="M242 470L296 524Q316 546 300 570Q276 598 248 578L178 510Q160 490 178 470Q196 456 214 470L270 524Q276 534 270 543Q260 552 250 544L209 504" />
          </svg>
          <svg viewBox="478 450 144 136" className="ml-[53px] mr-[25px] h-[45.3px] w-[48px] shrink-0 -translate-y-px">
            <path fillRule="evenodd" fill="#8797a2" d="M518 467L523 459Q527 453 535 453H564Q572 453 576 459L582 467Q585 471 592 471H602Q620 471 620 489V566Q620 584 602 584H498Q480 584 480 566V489Q480 471 498 471H508Q515 471 518 467ZM549 487A35 35 0 1 0 549 557A35 35 0 1 0 549 487Z" />
            <circle cx="549" cy="522" r="25" fill="#8797a2" />
          </svg>
        </div>
        <div className="ml-auto flex h-[111px] w-[111px] items-center justify-center rounded-full bg-[#02a884]">
          <svg viewBox="845 450 110 150" className="h-[50px] w-[36.7px]">
            <rect x="879" y="452" width="42" height="88" rx="21" fill="#fff" />
            <path d="M855 519Q857 562 900 564Q943 562 945 519M900 565V591" fill="none" stroke="#fff" strokeWidth="14" strokeLinecap="square" />
          </svg>
        </div>
      </footer>
    </main>
  );
}
